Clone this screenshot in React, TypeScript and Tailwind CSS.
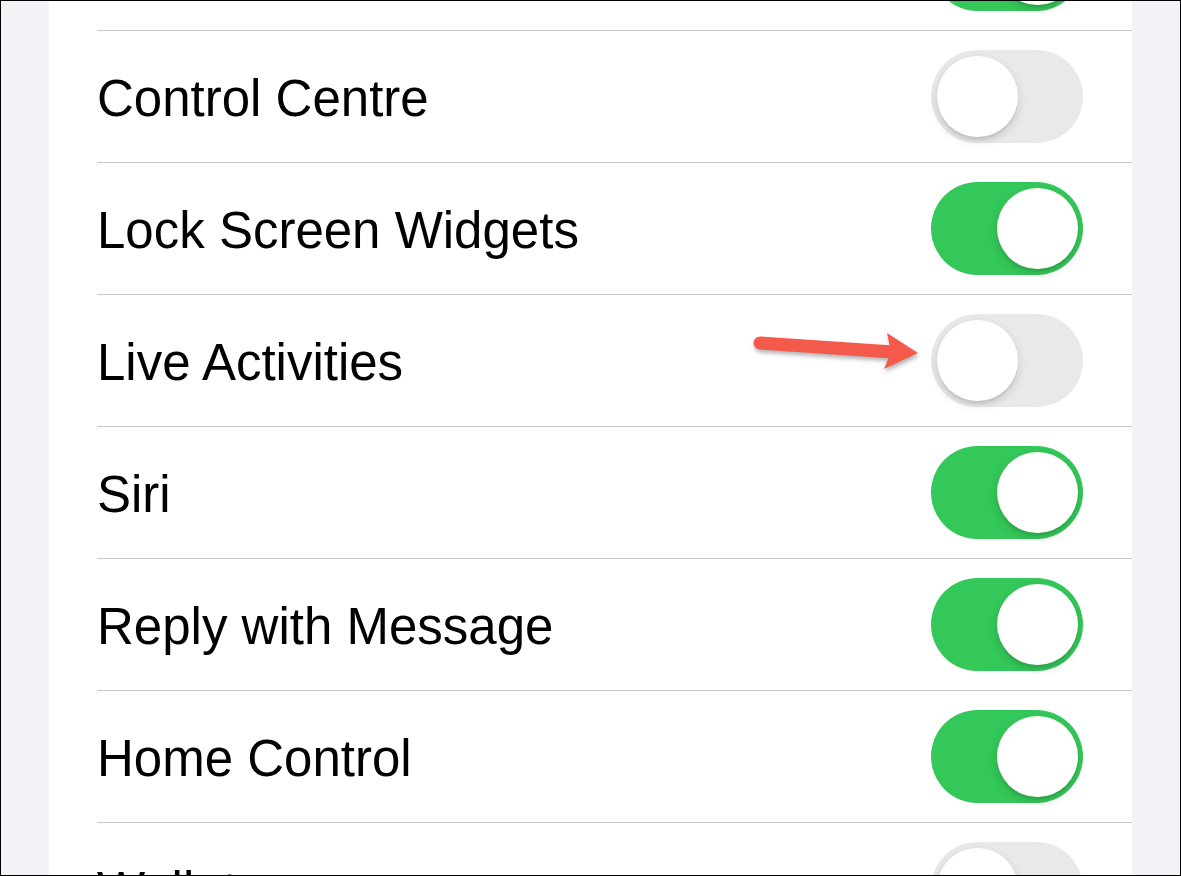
const rows: { label: string; on: boolean }[] = [
  { label: "Notifications", on: true },
  { label: "Control Centre", on: false },
  { label: "Lock Screen Widgets", on: true },
  { label: "Live Activities", on: false },
  { label: "Siri", on: true },
  { label: "Reply with Message", on: true },
  { label: "Home Control", on: true },
  { label: "Wallet", on: false },
];

function Toggle({ on }: { on: boolean }) {
  return (
    <div
      className={
        on
          ? "relative w-[152px] h-[93px] shrink-0 rounded-full bg-[#34c759]"
          : "relative w-[152px] h-[93px] shrink-0 rounded-full bg-[#e9e9ea]"
      }
    >
      <div
        className={
          on
            ? "absolute top-[6px] right-[5px] w-[81px] h-[81px] rounded-full bg-white shadow-[0_4px_10px_rgba(0,0,0,0.15),0_3px_1px_rgba(0,0,0,0.05)]"
            : "absolute top-[6px] left-[6px] w-[81px] h-[81px] rounded-full bg-white shadow-[0_4px_10px_rgba(0,0,0,0.15),0_3px_1px_rgba(0,0,0,0.05)]"
        }
      />
    </div>
  );
}

function Arrow() {
  return (
    <svg
      className="absolute left-[744px] top-[324px]"
      width="180"
      height="55"
      viewBox="0 0 180 55"
      style={{ filter: "drop-shadow(1px 3px 2px rgba(0,0,0,0.3))" }}
    >
      <line x1="15" y1="18" x2="148" y2="27" stroke="#f45a4c" strokeWidth="13" strokeLinecap="round" />
      <polygon points="142,8 173,28 139,44 146,27" fill="#f45a4c" />
    </svg>
  );
}

export default function App() {
  return (
    <div className="relative w-[1181px] h-[876px] overflow-hidden border border-black bg-[#f2f2f7] font-['Liberation_Sans',Arial,sans-serif]">
      <div className="mx-[48px] h-full overflow-hidden bg-white">
        <div className="-mt-[102px]">
          {rows.map((r) => (
            <div
              key={r.label}
              className="ml-[48px] h-[132px] flex items-center justify-between border-b border-[#c8c8ca] pr-[49px]"
            >
              <span className="pt-[4px] text-[51px] leading-none text-black">{r.label}</span>
              <Toggle on={r.on} />
            </div>
          ))}
        </div>
      </div>
      <Arrow />
    </div>
  );
}
